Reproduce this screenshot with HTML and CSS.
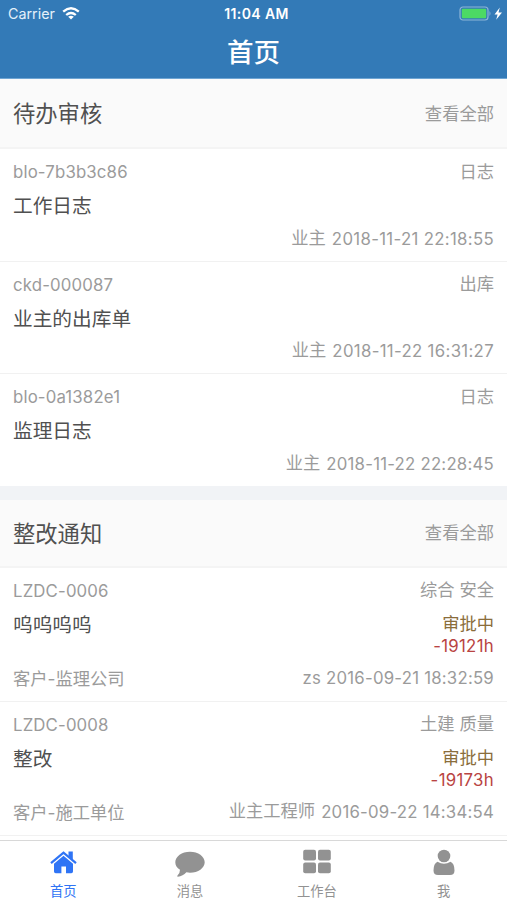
FILE: index.html
```html
<!DOCTYPE html>
<html lang="zh-CN">
<head>
<meta charset="utf-8">
<title>首页</title>
<link rel="stylesheet" href="styles.css">
</head>
<body>
<div class="app">
  <header class="top">
    <div class="status">
      <div class="carrier"><span>Carrier</span>
        <svg width="18" height="13" viewBox="0 0 18 13" fill="none" stroke="#fff" stroke-width="2.3"><path d="M1.200 4.700Q9-2.100 16.800 4.700M4.200 8Q9 3.900 13.800 8"/><path d="M9 12.500L6.200 9.800Q9 7.600 11.800 9.800Z" fill="#fff" stroke="none"/></svg>
      </div>
      <div class="clock">11:04 AM</div>
      <div class="power">
        <svg width="44" height="15" viewBox="0 0 44 15"><rect x="1" y="1" width="28" height="13" rx="3" fill="none" stroke="#8eb5d8" stroke-width="1.2"/><rect x="2.8" y="2.8" width="24.4" height="9.4" rx="1" fill="#4cd964"/><path d="M30.5 5q2 2.500 0 5z" fill="#8eb5d8"/><path d="M40.800 1.500L35.500 8.400H38.600L37.200 13.700L43 6.500H39.500Z" fill="#fff"/></svg>
      </div>
    </div>
    <h1>首页</h1>
  </header>
  <main class="content">
    <section>
      <div class="head"><h2>待办审核</h2><a class="more">查看全部</a></div>
      <article class="item">
        <div class="line"><span class="code">blo-7b3b3c86</span><span class="kind">日志</span></div>
        <div class="line main"><h3>工作日志</h3></div>
        <div class="line foot"><span></span><div class="by"><span>业主</span><time class="wide">2018-11-21 22:18:55</time></div></div>
      </article>
      <article class="item">
        <div class="line"><span class="code">ckd-000087</span><span class="kind">出库</span></div>
        <div class="line main"><h3>业主的出库单</h3></div>
        <div class="line foot"><span></span><div class="by"><span>业主</span><time class="wide">2018-11-22 16:31:27</time></div></div>
      </article>
      <article class="item last">
        <div class="line"><span class="code">blo-0a1382e1</span><span class="kind">日志</span></div>
        <div class="line main"><h3>监理日志</h3></div>
        <div class="line foot"><span></span><div class="by"><span>业主</span><time>2018-11-22 22:28:45</time></div></div>
      </article>
    </section>
    <section class="notices">
      <div class="head"><h2>整改通知</h2><a class="more">查看全部</a></div>
      <article class="item tall">
        <div class="line"><span class="code">LZDC-0006</span><span class="kind">综合 安全</span></div>
        <div class="line main"><h3>呜呜呜呜</h3><div class="state"><span>审批中</span><b>-19121h</b></div></div>
        <div class="line foot"><span class="org">客户-监理公司</span><div class="by"><time>zs 2016-09-21 18:32:59</time></div></div>
      </article>
      <article class="item tall">
        <div class="line"><span class="code">LZDC-0008</span><span class="kind">土建 质量</span></div>
        <div class="line main"><h3>整改</h3><div class="state"><span>审批中</span><b>-19173h</b></div></div>
        <div class="line foot"><span class="org">客户-施工单位</span><div class="by"><span>业主工程师</span><time>2016-09-22 14:34:54</time></div></div>
      </article>
    </section>
  </main>
  <nav class="tabs">
    <a class="tab active"><svg width="30" height="30" viewBox="0 0 30 30" fill="currentColor"><path d="M15.500 7.800L25 15.800V23.500Q25 25.200 23.300 25.200H18V18.400H13.400V25.200H7.700Q6 25.200 6 23.500V15.800Z"/><path d="M3 15.200L15.500 4.600L28 15.200" fill="none" stroke="currentColor" stroke-width="2.200"/><path d="M20.500 3.500H24.800V12L20.500 8.400Z"/></svg><span>首页</span></a>
    <a class="tab"><svg width="30" height="30" viewBox="0 0 30 30" fill="currentColor"><path d="M15 3.700C23.200 3.700 29.700 8.400 29.700 14.200C29.700 20 23.200 24.700 15 24.700Q13.300 24.700 11.400 24.300Q8 28.100 2.800 28.700Q1.700 28.500 2.500 27.600Q5 25.200 5 21.800C1.900 19.900.3 17.200.3 14.200C.3 8.400 6.800 3.700 15 3.700Z"/></svg><span>消息</span></a>
    <a class="tab"><svg width="30" height="30" viewBox="0 0 30 30" fill="currentColor"><rect x="1.200" y="1.800" width="12.800" height="10.700" rx="2"/><rect x="16" y="1.800" width="12.800" height="10.700" rx="2"/><rect x="1.200" y="14.600" width="12.800" height="10.600" rx="2"/><rect x="16" y="14.600" width="12.800" height="10.600" rx="2"/></svg><span>工作台</span></a>
    <a class="tab"><svg width="30" height="30" viewBox="0 0 30 30" fill="currentColor"><circle cx="15" cy="8" r="6.300"/><path d="M8.500 13.700Q15 18 21.500 13.700Q25.500 15.500 25.500 22.500Q25.500 27 21 27H9Q4.500 27 4.500 22.500Q4.500 15.500 8.500 13.700Z"/></svg><span>我</span></a>
  </nav>
</div>
</body>
</html>
```
FILE: styles.css
```css
* { box-sizing: border-box; }
body { margin: 0; background: #fff; font-family: Inter, "Noto Sans CJK SC", sans-serif; color: #9b9b9b; }
h1, h2, h3 { margin: 0; font-weight: 400; }
.app { width: 507px; height: 900px; display: flex; flex-direction: column; overflow: hidden; }
.top { flex: none; height: 79px; background: #337ab7; color: #fff; border-bottom: 1px solid #6fa5d3; }
.status { height: 27px; display: grid; grid-template-columns: 1fr auto 1fr; align-items: center; padding: 0 4px 0 8px; }
.carrier { display: flex; align-items: center; gap: 7px; font-size: 14.3px; color: #e4f0fa; }
.clock { font-size: 14px; font-weight: 600; letter-spacing: .4px; padding-left: 2px; }
.power { display: flex; justify-content: flex-end; }
h1 { height: 51px; line-height: 51px; text-align: center; font-size: 26.5px; font-weight: 500; }
.content { flex: 1; min-height: 0; overflow: hidden; }
.head { height: 70px; padding: 0 13px 2px; display: flex; align-items: center; justify-content: space-between; background: #fafafa; border-bottom: 2px solid #f4f4f4; }
h2 { font-size: 22.3px; color: #505050; }
.more, .kind { font-size: 17.3px; }
.kind { line-height: 22px; }
.item { height: 112.7px; padding: 11px 13px 0; border-bottom: 1px solid #f1f1f1; }
.item.last { border-bottom: 0; height: 111.6px; }
.line { display: flex; justify-content: space-between; align-items: center; height: 23px; line-height: 23px; white-space: nowrap; }
.main { height: 44px; align-items: flex-start; }
h3 { font-size: 19.7px; line-height: 46px; color: #505050; }
.code { font-size: 16.8px; letter-spacing: .15px; padding-top: 2px; }
.by { display: flex; gap: 6px; font-size: 17.3px; line-height: 21px; }
.by time { font-size: 16.8px; line-height: 24px; letter-spacing: .22px; }
.by .wide { letter-spacing: .32px; }
.org { font-size: 17.3px; line-height: 21px; }
.notices { border-top: 14px solid #f1f3f6; }
.notices .head { height: 68px; padding-bottom: 2px; }
.tall { height: 134px; }
.tall .main { height: 65px; }
.state { display: flex; flex-direction: column; align-items: flex-end; padding-top: 11px; line-height: 22px; font-size: 17.3px; color: #8a6d3b; }
.state b { font-weight: 400; font-size: 16.8px; letter-spacing: .3px; color: #b94442; }
.tabs { flex: none; height: 60px; border-top: 1px solid #d8d8d8; display: grid; grid-template-columns: repeat(4, 1fr); background: #fff; }
.tab { display: flex; flex-direction: column; align-items: center; padding-top: 7px; font-size: 13.3px; line-height: 20px; color: #929292; }
.tab span { margin-top: 3px; }
.active { color: #2f74f5; }
```
